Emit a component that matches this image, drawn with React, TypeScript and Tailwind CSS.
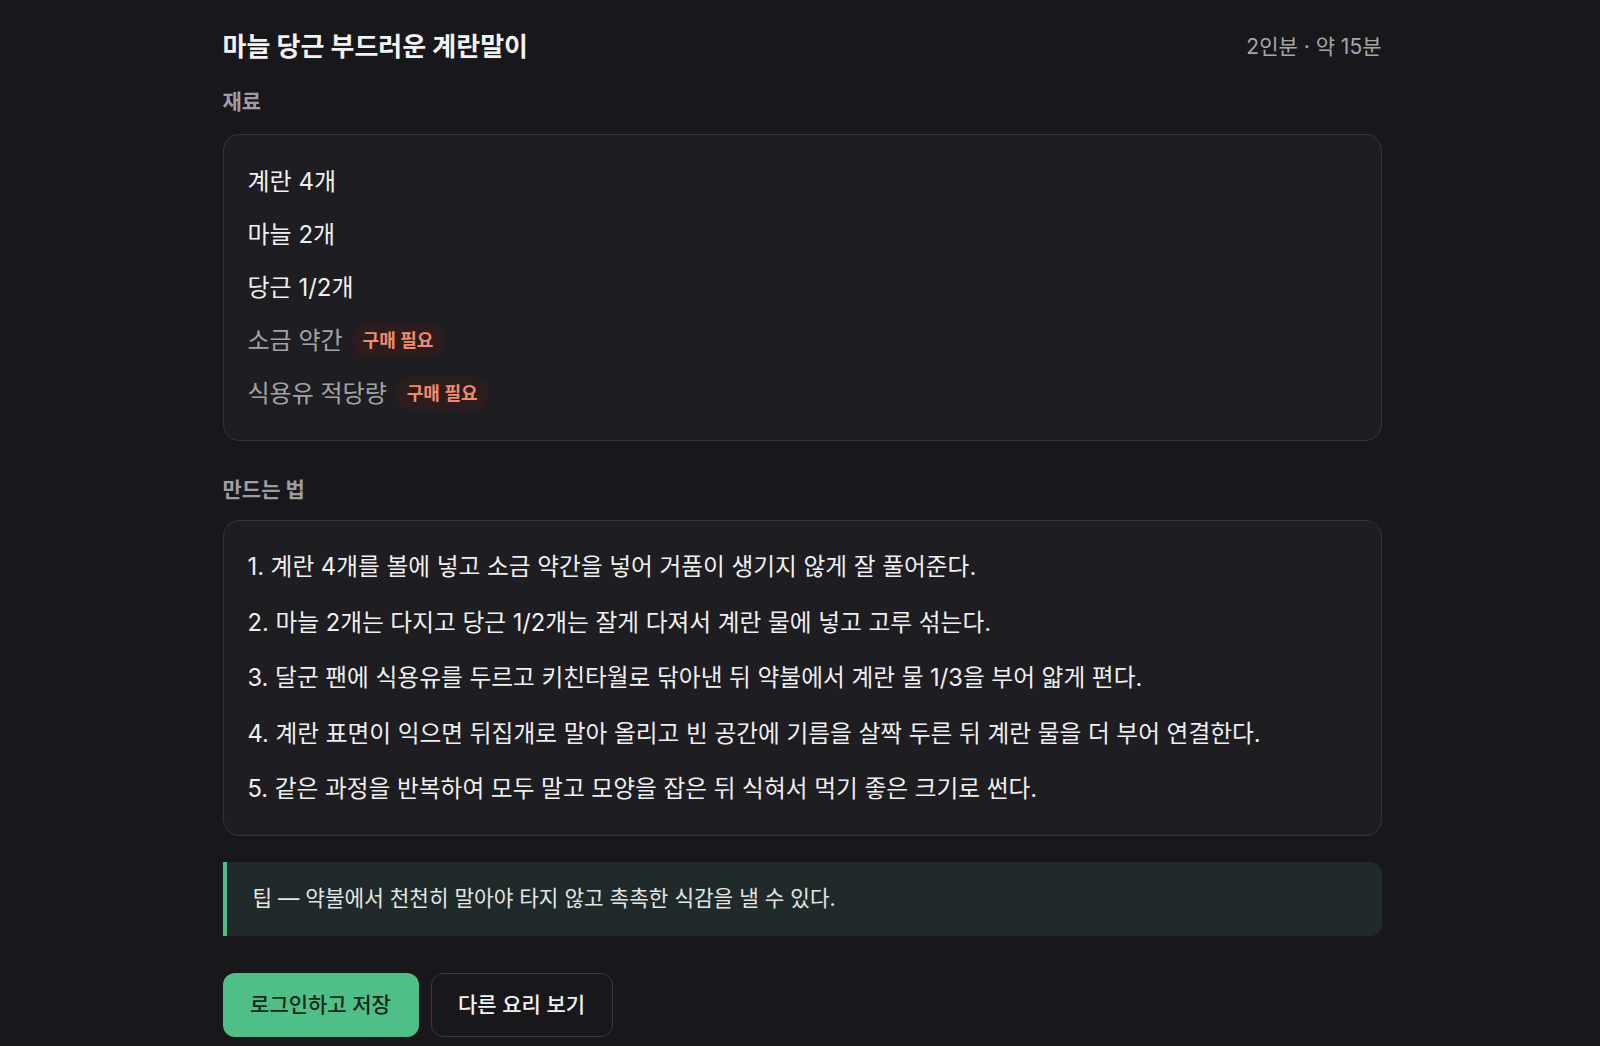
import React from 'react';

const ingredients = [
  { name: '계란 4개', missing: false },
  { name: '마늘 2개', missing: false },
  { name: '당근 1/2개', missing: false },
  { name: '소금 약간', missing: true },
  { name: '식용유 적당량', missing: true },
];

const steps = [
  '1. 계란 4개를 볼에 넣고 소금 약간을 넣어 거품이 생기지 않게 잘 풀어준다.',
  '2. 마늘 2개는 다지고 당근 1/2개는 잘게 다져서 계란 물에 넣고 고루 섞는다.',
  '3. 달군 팬에 식용유를 두르고 키친타월로 닦아낸 뒤 약불에서 계란 물 1/3을 부어 얇게 편다.',
  '4. 계란 표면이 익으면 뒤집개로 말아 올리고 빈 공간에 기름을 살짝 두른 뒤 계란 물을 더 부어 연결한다.',
  '5. 같은 과정을 반복하여 모두 말고 모양을 잡은 뒤 식혀서 먹기 좋은 크기로 썬다.',
];

const App: React.FC = () => {
  return (
    <div className="min-h-screen bg-[#18171c] font-['Inter','Noto_Sans_CJK_KR',sans-serif] text-[#ededed]">
      <div className="flex justify-center pl-[4px]">
        <div className="w-[1159px] pt-[29px] pb-8">
          {/* Header */}
          <div className="flex items-center justify-between">
            <h1 className="text-[26px] leading-[36px] font-bold text-[#f3f3f3]">마늘 당근 부드러운 계란말이</h1>
            <span className="text-[21px] text-[#a6a6a9]">2인분 · 약 15분</span>
          </div>

          {/* Ingredients */}
          <h2 className="mt-[23px] text-[21px] leading-[28px] font-bold text-[#9e9ea2]">재료</h2>
          <div className="mt-[18px] rounded-2xl border border-[#34333a] bg-[#1e1d22] px-6 py-5">
            {ingredients.map((item) => (
              <div key={item.name} className="flex h-[53px] items-center gap-2.5">
                <span className={`text-[24px] ${item.missing ? 'text-[#a3a3a6]' : 'text-[#f0f0f0]'}`}>{item.name}</span>
                {item.missing && (
                  <span className="rounded-xl bg-[#2d1c1e] px-2.5 py-[3px] text-[18px] font-semibold text-[#f08b6e]">
                    구매 필요
                  </span>
                )}
              </div>
            ))}
          </div>

          {/* Steps */}
          <h2 className="mt-[35px] text-[21px] leading-[28px] font-bold text-[#9e9ea2]">만드는 법</h2>
          <div className="mt-4 rounded-2xl border border-[#34333a] bg-[#1e1d22] px-6 py-[18px]">
            {steps.map((step) => (
              <div key={step} className="flex h-[55.6px] items-center text-[23.7px] text-[#f0f0f0]">
                {step}
              </div>
            ))}
          </div>

          {/* Tip */}
          <div className="mt-[26px] flex h-[74px] items-center rounded-r-xl border-l-4 border-[#4fbf87] bg-[#212a2a] pl-[26px] text-[21.3px] text-[#e4e6e5]">
            팁 — 약불에서 천천히 말아야 타지 않고 촉촉한 식감을 낼 수 있다.
          </div>

          {/* Actions */}
          <div className="mt-[37px] flex gap-3">
            <button className="h-16 w-[196px] rounded-xl bg-[#4fbf87] text-[21px] font-medium text-[#10281b]">
              로그인하고 저장
            </button>
            <button className="h-16 w-[182px] rounded-xl border border-[#3a3940] bg-[#18171c] text-[21px] font-medium text-[#f3f3f3]">
              다른 요리 보기
            </button>
          </div>
        </div>
      </div>
    </div>
  );
};

export default App;
